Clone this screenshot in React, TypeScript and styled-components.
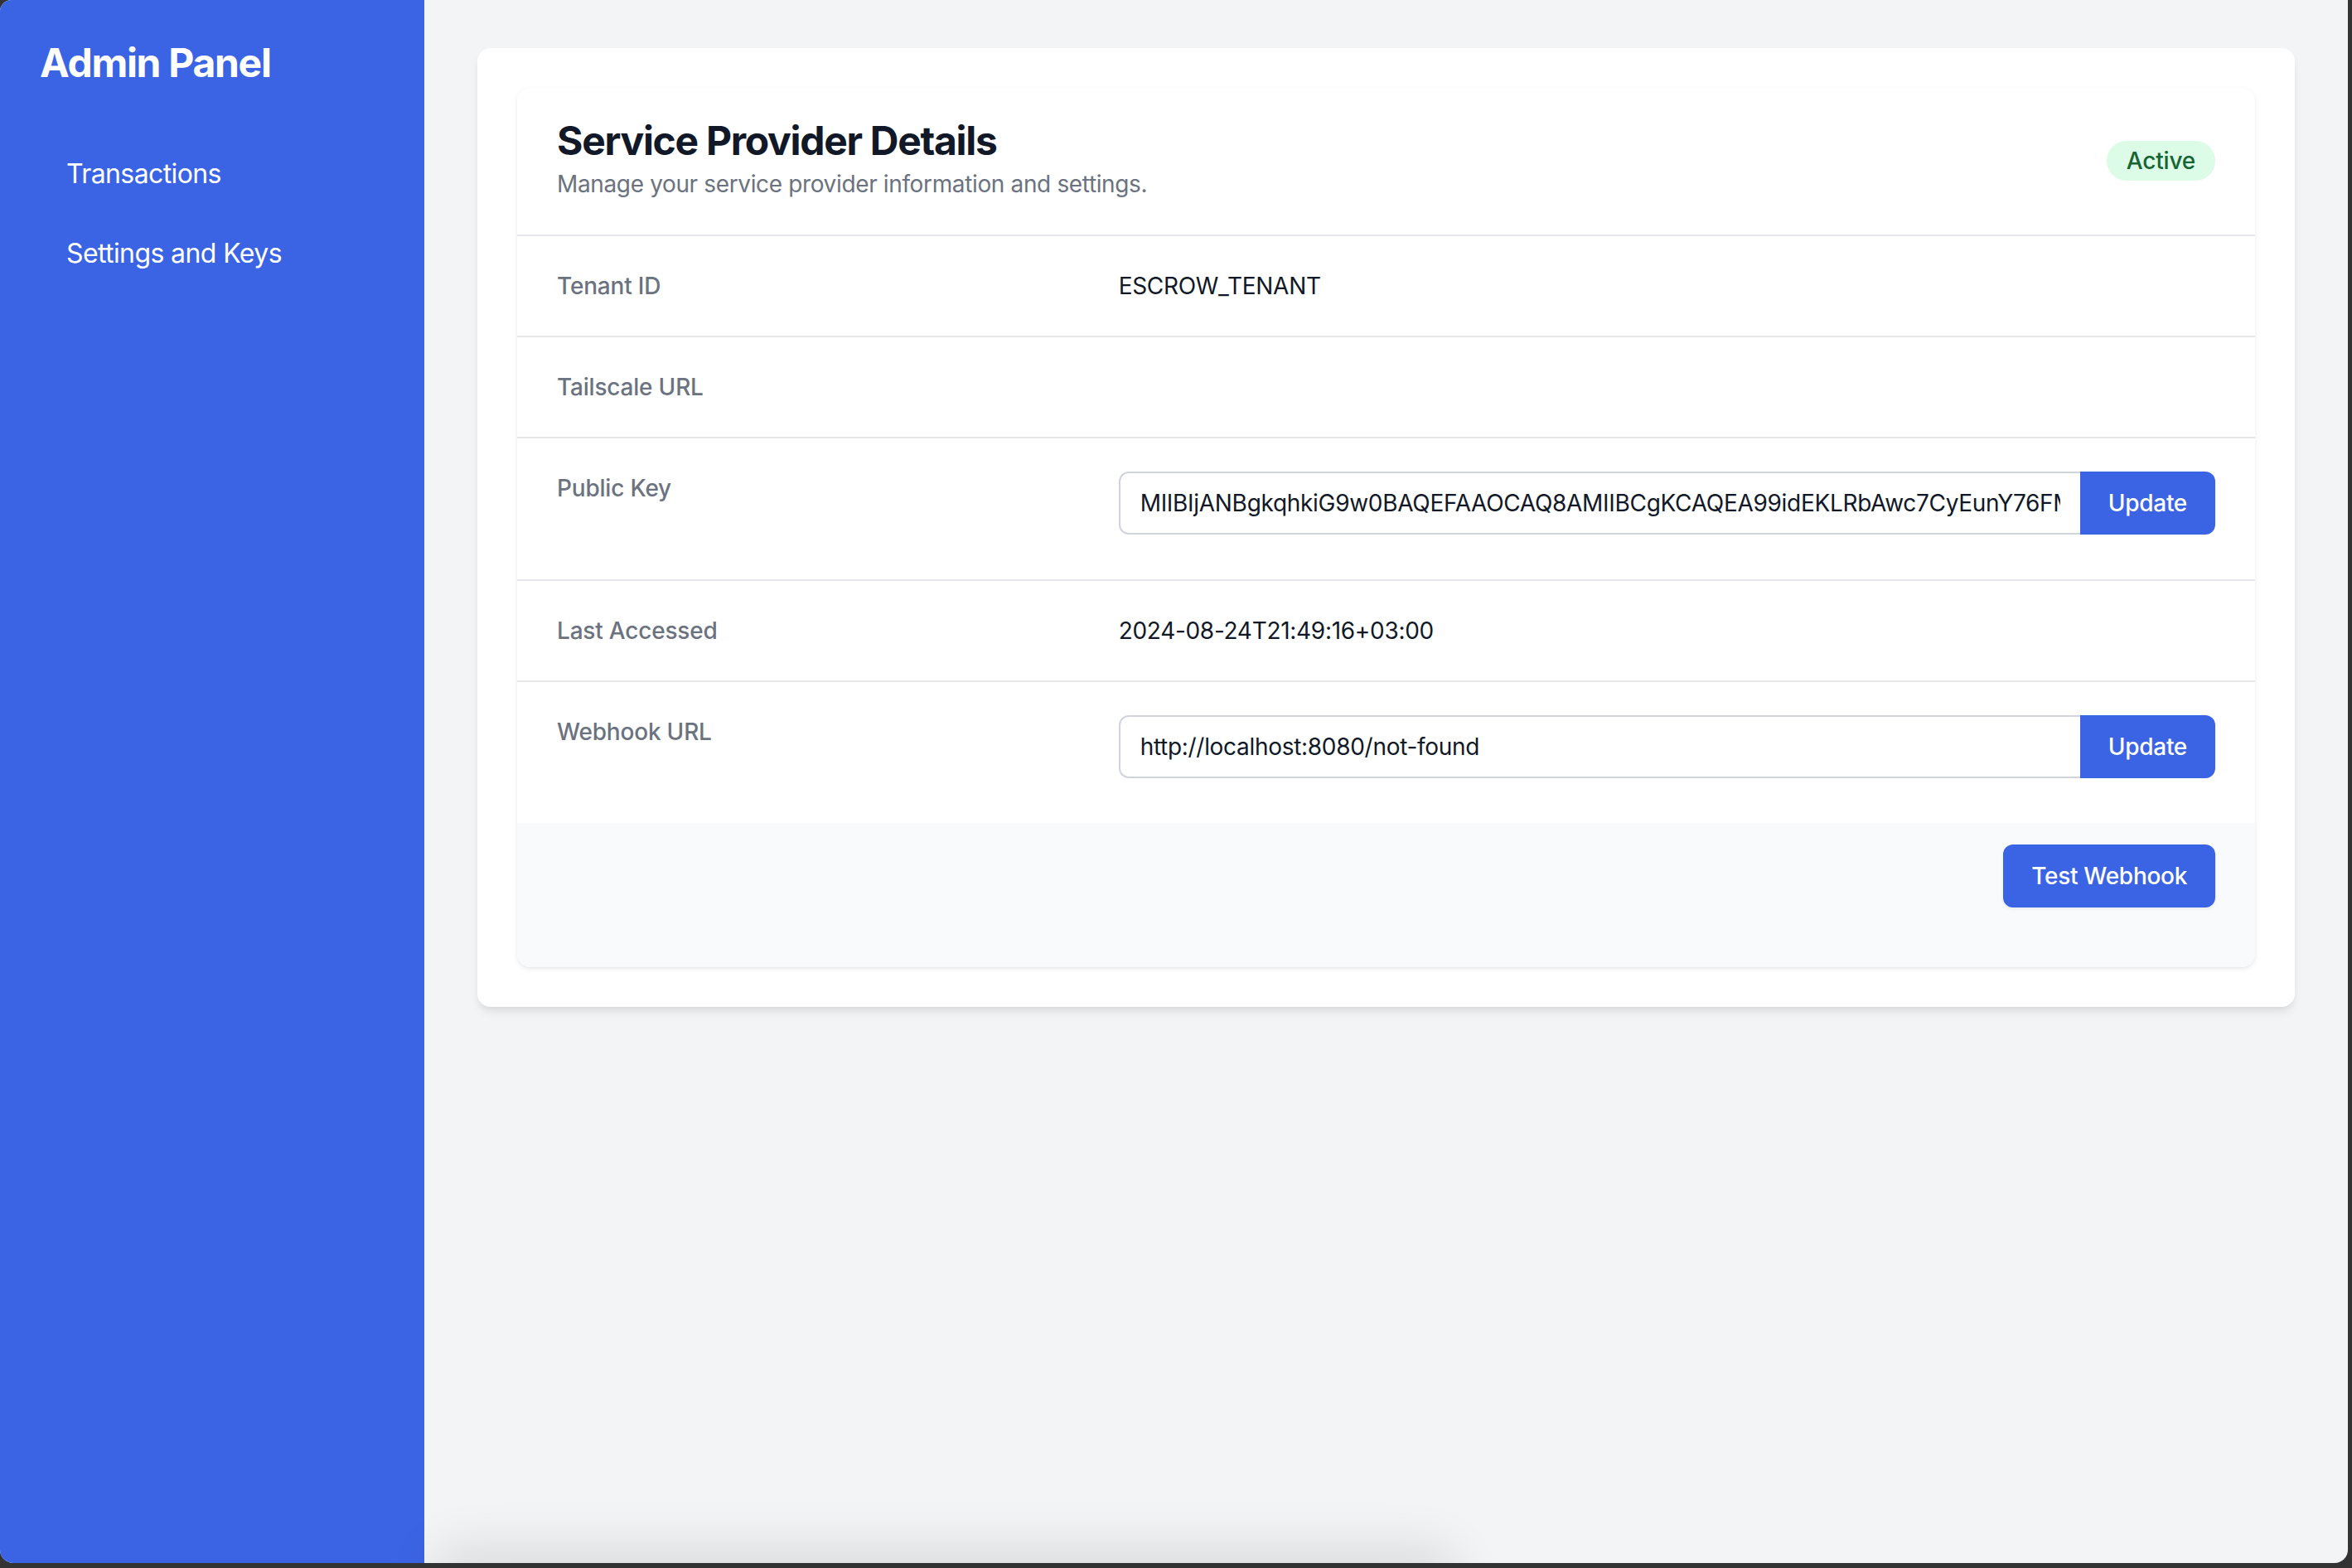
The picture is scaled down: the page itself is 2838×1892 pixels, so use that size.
import styled, { createGlobalStyle } from "styled-components";

const GlobalStyle = createGlobalStyle`
  * { box-sizing: border-box; }
  html, body { margin: 0; padding: 0; }
  body {
    background: #333333;
    font-family: Inter, "Noto Sans", "Liberation Sans", sans-serif;
    -webkit-font-smoothing: antialiased;
  }
`;

const BLUE = "#3b64e4";

const Window = styled.div`
  position: relative;
  display: flex;
  width: 2833px;
  height: 1886px;
  overflow: hidden;
  border-radius: 14px 0 16px 16px;
  background: #f3f4f6;
`;

const Sidebar = styled.aside`
  width: 512px;
  flex-shrink: 0;
  background: ${BLUE};
  padding: 44px 48px;
  color: #fff;
`;

const Brand = styled.h1`
  margin: 0;
  font-size: 48px;
  line-height: 64px;
  font-weight: 700;
  letter-spacing: -1.3px;
`;

const Nav = styled.nav`
  display: flex;
  flex-direction: column;
  gap: 16px;
  margin-top: 62px;
`;

const NavLink = styled.a`
  display: block;
  padding: 16px 32px;
  font-size: 32px;
  line-height: 48px;
  letter-spacing: -0.6px;
  color: #fff;
  text-decoration: none;
`;

const Main = styled.main`
  flex: 1;
  padding: 58px 64px;
`;

const Panel = styled.section`
  background: #fff;
  border-radius: 16px;
  padding: 48px;
  box-shadow: 0 8px 12px -2px rgba(0, 0, 0, 0.08), 0 4px 8px -4px rgba(0, 0, 0, 0.08);
`;

const Card = styled.div`
  background: #fff;
  border-radius: 16px;
  overflow: hidden;
  box-shadow: 0 2px 6px rgba(0, 0, 0, 0.08), 0 2px 4px -2px rgba(0, 0, 0, 0.06);
`;

const CardHeader = styled.div`
  display: flex;
  align-items: center;
  justify-content: space-between;
  padding: 32px 48px 41px;
`;

const Title = styled.h2`
  margin: 0;
  font-size: 48px;
  line-height: 64px;
  font-weight: 700;
  color: #111827;
  letter-spacing: -1.3px;
`;

const Subtitle = styled.p`
  margin: 0;
  font-size: 28px;
  line-height: 40px;
  letter-spacing: -0.36px;
  color: #6b7280;
`;

const Badge = styled.span`
  display: inline-block;
  margin-top: 8px;
  padding: 4px 24px;
  border-radius: 999px;
  background: #dcfce7;
  color: #166534;
  font-size: 28px;
  line-height: 40px;
  font-weight: 500;
  letter-spacing: -0.2px;
`;

const DetailRow = styled.div<{ $tall?: boolean }>`
  display: grid;
  grid-template-columns: repeat(3, 1fr);
  column-gap: 32px;
  border-top: 2px solid #e5e7eb;
  padding: 40px 48px ${(p) => (p.$tall ? "54px" : "40px")};
`;

const Label = styled.dt`
  font-size: 28px;
  line-height: 40px;
  font-weight: 500;
  letter-spacing: -0.2px;
  color: #6b7280;
`;

const Value = styled.dd`
  grid-column: span 2;
  margin: 0;
  font-size: 28px;
  line-height: 40px;
  letter-spacing: -0.3px;
  color: #111827;
  min-height: 40px;
`;

const InputGroup = styled.div`
  display: flex;
  height: 76px;
`;

const TextInput = styled.input`
  flex: 1;
  min-width: 0;
  height: 100%;
  padding: 0 24px;
  border: 2px solid #d1d5db;
  border-right: none;
  border-radius: 12px 0 0 12px;
  font-family: inherit;
  font-size: 28px;
  letter-spacing: -0.3px;
  color: #111827;
  background: #fff;
  outline: none;
`;

const Button = styled.button<{ $attached?: boolean }>`
  height: 76px;
  padding: 0 34px;
  border: none;
  border-radius: ${(p) => (p.$attached ? "0 12px 12px 0" : "12px")};
  background: ${BLUE};
  color: #fff;
  font-family: inherit;
  font-size: 28px;
  font-weight: 500;
  letter-spacing: -0.3px;
  cursor: pointer;
  box-shadow: ${(p) => (p.$attached ? "none" : "0 2px 4px rgba(0,0,0,0.06)")};
`;

const CardFooter = styled.div`
  display: flex;
  justify-content: flex-end;
  background: #f9fafb;
  padding: 26px 48px 72px;
`;

const DockShadow = styled.div`
  position: absolute;
  left: 540px;
  bottom: -30px;
  width: 1200px;
  height: 30px;
  border-radius: 40px;
  box-shadow: 0 0 60px 20px rgba(0, 0, 0, 0.1);
  pointer-events: none;
`;

const publicKey =
  "MIIBIjANBgkqhkiG9w0BAQEFAAOCAQ8AMIIBCgKCAQEA99idEKLRbAwc7CyEunY76FMxk2Lq0pV3sT8hWnYc4ZrEoQjU5bD1aXgKf9N2mHtRvLpC7wIDAQAB";

export default function App() {
  return (
    <>
      <GlobalStyle />
      <Window>
        <Sidebar>
          <Brand>Admin Panel</Brand>
          <Nav>
            <NavLink href="#">Transactions</NavLink>
            <NavLink href="#">Settings and Keys</NavLink>
          </Nav>
        </Sidebar>
        <Main>
          <Panel>
            <Card>
              <CardHeader>
                <div>
                  <Title>Service Provider Details</Title>
                  <Subtitle>Manage your service provider information and settings.</Subtitle>
                </div>
                <Badge>Active</Badge>
              </CardHeader>
              <dl style={{ margin: 0 }}>
                <DetailRow>
                  <Label>Tenant ID</Label>
                  <Value>ESCROW_TENANT</Value>
                </DetailRow>
                <DetailRow>
                  <Label>Tailscale URL</Label>
                  <Value></Value>
                </DetailRow>
                <DetailRow $tall>
                  <Label>Public Key</Label>
                  <Value>
                    <InputGroup>
                      <TextInput defaultValue={publicKey} />
                      <Button $attached>Update</Button>
                    </InputGroup>
                  </Value>
                </DetailRow>
                <DetailRow>
                  <Label>Last Accessed</Label>
                  <Value>2024-08-24T21:49:16+03:00</Value>
                </DetailRow>
                <DetailRow $tall>
                  <Label>Webhook URL</Label>
                  <Value>
                    <InputGroup>
                      <TextInput defaultValue="http://localhost:8080/not-found" />
                      <Button $attached>Update</Button>
                    </InputGroup>
                  </Value>
                </DetailRow>
              </dl>
              <CardFooter>
                <Button>Test Webhook</Button>
              </CardFooter>
            </Card>
          </Panel>
        </Main>
        <DockShadow />
      </Window>
    </>
  );
}
